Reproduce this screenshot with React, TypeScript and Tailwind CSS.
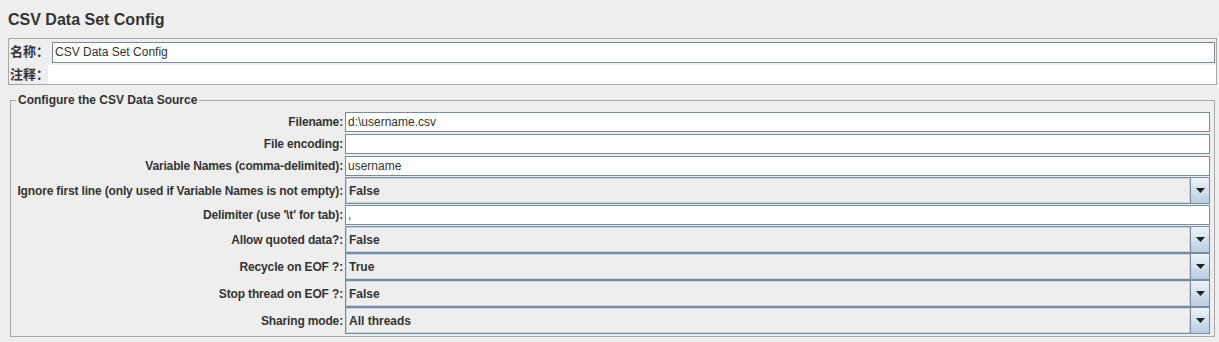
import React from "react";

type Row =
  | { kind: "text"; label: string; value: string }
  | { kind: "combo"; label: string; value: string };

const rows: Row[] = [
  { kind: "text", label: "Filename:", value: "d:\\username.csv" },
  { kind: "text", label: "File encoding:", value: "" },
  { kind: "text", label: "Variable Names (comma-delimited):", value: "username" },
  { kind: "combo", label: "Ignore first line (only used if Variable Names is not empty):", value: "False" },
  { kind: "text", label: "Delimiter (use '\\t' for tab):", value: "," },
  { kind: "combo", label: "Allow quoted data?:", value: "False" },
  { kind: "combo", label: "Recycle on EOF ?:", value: "True" },
  { kind: "combo", label: "Stop thread on EOF ?:", value: "False" },
  { kind: "combo", label: "Sharing mode:", value: "All threads" },
];

function ComboBox({ value }: { value: string }) {
  return (
    <div className="flex h-[27px] w-full border border-[#7a8a99] bg-[#eeeeee]">
      <div className="flex flex-1 items-center border border-[#c6d7e8] pl-[2px] text-[12px] font-bold text-[#333333]">
        {value}
      </div>
      <div className="flex w-[19px] items-center justify-center border-l border-[#7a8a99] bg-gradient-to-b from-[#eef3f9] to-[#b8cde2]">
        <svg width="9" height="5" viewBox="0 0 9 5">
          <path d="M0 0 H9 L4.5 5 Z" fill="#222222" />
        </svg>
      </div>
    </div>
  );
}

function TextField({ value }: { value: string }) {
  return (
    <div className="flex h-[20px] w-full items-center border border-[#7a8a99] bg-white pl-[2px] text-[12px] text-[#333333]">
      {value}
    </div>
  );
}

export default function App() {
  return (
    <div
      className="h-[342px] w-[1219px] overflow-hidden bg-[#eeeeee] text-[#333333]"
      style={{ fontFamily: '"Liberation Sans", Arial, "Noto Sans CJK SC", sans-serif' }}
    >
      <div className="h-[38px] px-[8px] pt-[10px] text-[16px] font-bold leading-[20px]">
        CSV Data Set Config
      </div>

      <div className="ml-[8px] mr-[2px] h-[47px] border border-[#a8a8a8]">
        <div className="flex h-[26px] items-center pr-[1px]">
          <span className="w-[43px] shrink-0 whitespace-nowrap pl-[1px] text-[13px] font-bold">名称：</span>
          <div className="flex h-[21px] flex-1 items-center border border-[#7a8a99] bg-white pl-[2px] text-[12px]">
            CSV Data Set Config
          </div>
        </div>
        <div className="flex h-[19px] items-center">
          <span className="w-[39px] shrink-0 whitespace-nowrap pl-[1px] text-[13px] font-bold">注释：</span>
          <div className="h-full flex-1 bg-white" />
        </div>
      </div>

      <fieldset className="ml-[10px] mr-[4px] mt-[8px] h-[244px] border border-[#a8a8a8] px-[1px] pb-[2px] pt-0">
        <legend className="ml-[4px] px-[2px] text-[12px] font-bold leading-[14px]">
          Configure the CSV Data Source
        </legend>
        <div className="mt-[4px] flex flex-col pr-[3px]">
          {rows.map((r) => (
            <div
              key={r.label}
              className={`flex items-center ${r.kind === "text" ? "h-[22px]" : "h-[27px]"}`}
            >
              <div className="flex w-[333px] shrink-0 justify-end pr-[2px]">
                <span className="whitespace-nowrap text-[12px] font-bold tracking-[-0.15px]">
                  {r.label}
                </span>
              </div>
              <div className="flex-1">
                {r.kind === "text" ? <TextField value={r.value} /> : <ComboBox value={r.value} />}
              </div>
            </div>
          ))}
        </div>
      </fieldset>
    </div>
  );
}
